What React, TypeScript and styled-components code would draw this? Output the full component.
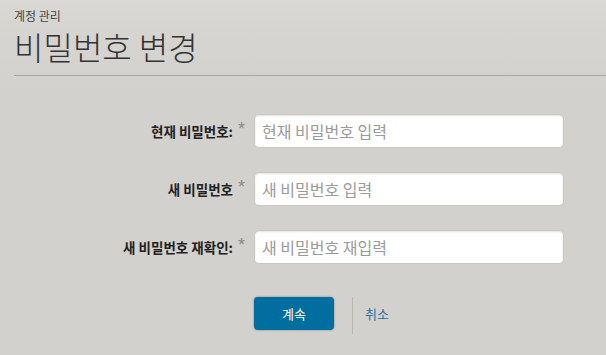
import React from 'react';
import styled, { createGlobalStyle } from 'styled-components';

const GlobalStyle = createGlobalStyle`
  html, body {
    margin: 0;
    padding: 0;
    background: #d3d1cd;
  }
  body {
    font-family: 'Noto Sans CJK KR', 'Noto Sans', sans-serif;
    color: #333;
  }
`;

const Page = styled.div`
  width: 606px;
  height: 355px;
  overflow: hidden;
  background: linear-gradient(180deg, #dad8d4 0px, #d6d4d0 40px, #d3d1cd 90px);
`;

const Header = styled.header`
  padding: 9px 0 0 14px;
`;

const Breadcrumb = styled.div`
  font-size: 12px;
  line-height: 14px;
  color: #444;
`;

const Title = styled.h1`
  margin: 0;
  font-size: 32px;
  font-weight: 300;
  line-height: 46px;
  color: #333;
  padding-bottom: 6px;
  border-bottom: 1px solid #aaa8a4;
`;

const Form = styled.form`
  display: flex;
  flex-direction: column;
  gap: 26px;
  padding-top: 39px;
`;

const Row = styled.div`
  display: grid;
  grid-template-columns: 233px 22px 308px;
  align-items: center;
`;

const Label = styled.label`
  text-align: right;
  font-size: 13.5px;
  font-weight: 700;
  color: #222;
`;

const Required = styled.span`
  align-self: start;
  padding: 5px 0 0 5px;
  font-size: 18px;
  line-height: 18px;
  color: #8a8a8a;
  font-family: 'Liberation Sans', sans-serif;
`;

const Input = styled.input`
  box-sizing: border-box;
  height: 32px;
  width: 308px;
  border: none;
  border-radius: 4px;
  background: #fff;
  box-shadow: inset 0 1px 2px rgba(0, 0, 0, 0.12), 0 0 0 1px rgba(0, 0, 0, 0.04);
  padding: 0 7px;
  font: 400 16px 'Noto Sans CJK KR', 'Noto Sans', sans-serif;
  color: #333;
  outline: none;

  &::placeholder {
    color: #9a9a9a;
  }
`;

const Actions = styled.div`
  display: flex;
  align-items: flex-start;
  padding: 34px 0 0 254px;
`;

const PrimaryButton = styled.button`
  width: 80px;
  height: 33px;
  border: none;
  border-radius: 4px;
  background: #006fa0;
  color: #fff;
  font-family: 'Noto Sans CJK KR', 'Noto Sans', sans-serif;
  font-size: 13px;
  box-shadow: 0 0 2px rgba(0, 0, 0, 0.45);
  cursor: pointer;
`;

const Divider = styled.span`
  width: 1px;
  height: 37px;
  margin: 0 12px 0 18px;
  background: #b9b7b3;
`;

const CancelLink = styled.a`
  font-size: 13px;
  line-height: 19px;
  color: #1d72a8;
  text-decoration: none;
  margin-top: 7px;
`;

const fields = [
  { label: '현재 비밀번호:', placeholder: '현재 비밀번호 입력' },
  { label: '새 비밀번호', placeholder: '새 비밀번호 입력' },
  { label: '새 비밀번호 재확인:', placeholder: '새 비밀번호 재입력' },
];

const App = (): JSX.Element => (
  <Page>
    <GlobalStyle />
    <Header>
      <Breadcrumb>계정 관리</Breadcrumb>
      <Title>비밀번호 변경</Title>
    </Header>
    <Form onSubmit={(e) => e.preventDefault()}>
      {fields.map((f) => (
        <Row key={f.label}>
          <Label>{f.label}</Label>
          <Required>*</Required>
          <Input type="password" placeholder={f.placeholder} />
        </Row>
      ))}
    </Form>
    <Actions>
      <PrimaryButton type="button">계속</PrimaryButton>
      <Divider />
      <CancelLink href="#">취소</CancelLink>
    </Actions>
  </Page>
);

export default App;
